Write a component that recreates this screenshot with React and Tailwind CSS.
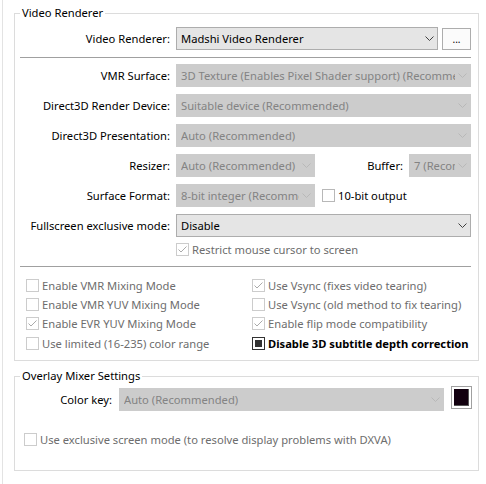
import React from "react";

function Chevron({ disabled }) {
  return (
    <svg width="9" height="5" viewBox="0 0 9 5" className="block">
      <polyline
        points="0.5,0.5 4.5,4.5 8.5,0.5"
        fill="none"
        stroke={disabled ? "#b8b8b8" : "#404040"}
        strokeWidth="1"
      />
    </svg>
  );
}

function Select({ disabled, children, className = "" }) {
  return (
    <div
      className={
        (disabled
          ? "border-[#cccccc] bg-[#cccccc] text-[#838383] "
          : "border-[#adadad] bg-[#e5e5e5] text-black ") +
        "flex h-[23px] min-w-0 items-center border pl-[4px] " +
        className
      }
    >
      <span className="min-w-0 flex-1 overflow-hidden whitespace-nowrap">{children}</span>
      <span className="flex w-[15px] shrink-0 justify-center">
        <Chevron disabled={disabled} />
      </span>
    </div>
  );
}

function CheckMark({ color }) {
  return (
    <svg width="11" height="11" viewBox="0 0 11 11" className="block">
      <polyline points="1.5,5.5 4,8 9.5,2.5" fill="none" stroke={color} strokeWidth="1" />
    </svg>
  );
}

function Checkbox({ state = "off", disabled = true, bold = false, children }) {
  let box;
  if (state === "mixed") {
    box = (
      <span className="flex h-[13px] w-[13px] shrink-0 items-center justify-center border border-[#333333] bg-white">
        <span className="block h-[7px] w-[7px] bg-[#333333]" />
      </span>
    );
  } else {
    box = (
      <span
        className={
          (disabled ? "border-[#cccccc] " : "border-[#b8b8b8] ") +
          "flex h-[13px] w-[13px] shrink-0 items-center justify-center border bg-white"
        }
      >
        {state === "on" ? <CheckMark color="#aaaaaa" /> : null}
      </span>
    );
  }
  return (
    <div className="flex h-[19px] items-center gap-[3px] whitespace-nowrap">
      {box}
      <span
        className={
          (bold ? "font-bold text-black " : disabled ? "text-[#6d6d6d] " : "text-black ") + "leading-[16px]"
        }
      >
        {children}
      </span>
    </div>
  );
}

function Row({ label, children, className = "" }) {
  return (
    <div className={"flex min-w-0 items-center " + className}>
      <div className="w-[150px] shrink-0 whitespace-nowrap text-right">{label}</div>
      <div className="ml-[6px] flex min-w-0 flex-1 items-center">{children}</div>
    </div>
  );
}

export default function App() {
  return (
    <div className="h-[484px] w-[486px] overflow-hidden bg-white pl-[2px] font-['Noto_Sans',sans-serif] text-[11.2px] leading-[16px] text-black">
      <div className="h-full border-l border-[#e3e3e3] pl-[11px] pt-[6px]">
        <fieldset className="w-[465px] min-w-0 border border-[#dcdcdc] pb-[7px] pl-[5px] pr-[7px]">
          <legend className="ml-0 px-[2px] leading-[14px]">Video Renderer</legend>
          <Row label="Video Renderer:" className="mt-[7px]">
            <Select className="flex-1">Madshi Video Renderer</Select>
            <button className="ml-[4px] h-[22px] w-[29px] shrink-0 border border-[#adadad] bg-[#fbfbfb] text-[10px] leading-[10px] text-black">
              ...
            </button>
          </Row>
          <div className="mt-[7px] h-px bg-[#a0a0a0]" />
          <Row label="VMR Surface:" className="mt-[6px]">
            <Select disabled className="flex-1">
              3D Texture (Enables Pixel Shader support) (Recommended)
            </Select>
          </Row>
          <Row label="Direct3D Render Device:" className="mt-[7px]">
            <Select disabled className="flex-1">
              Suitable device (Recommended)
            </Select>
          </Row>
          <Row label="Direct3D Presentation:" className="mt-[7px]">
            <Select disabled className="flex-1">
              Auto (Recommended)
            </Select>
          </Row>
          <Row label="Resizer:" className="mt-[7px]">
            <Select disabled className="w-[139px] shrink-0">
              Auto (Recommended)
            </Select>
            <div className="flex-1" />
            <span className="whitespace-nowrap">Buffer:</span>
            <Select disabled className="ml-[6px] w-[62px] shrink-0">
              7 (Recommended)
            </Select>
          </Row>
          <Row label="Surface Format:" className="mt-[7px]">
            <Select disabled className="w-[139px] shrink-0">
              8-bit integer (Recommended)
            </Select>
            <div className="ml-[7px]">
              <Checkbox state="off" disabled={false}>
                10-bit output
              </Checkbox>
            </div>
          </Row>
          <Row label="Fullscreen exclusive mode:" className="mt-[7px]">
            <Select className="flex-1">Disable</Select>
          </Row>
          <div className="mt-[3px] pl-[156px]">
            <Checkbox state="on">Restrict mouse cursor to screen</Checkbox>
          </div>
          <div className="mt-[7px] h-px bg-[#a0a0a0]" />
          <div className="mt-[9px] grid grid-cols-[226px_1fr] pl-[6px]">
            <Checkbox>Enable VMR Mixing Mode</Checkbox>
            <Checkbox state="on">Use Vsync (fixes video tearing)</Checkbox>
            <Checkbox>Enable VMR YUV Mixing Mode</Checkbox>
            <Checkbox>Use Vsync (old method to fix tearing)</Checkbox>
            <Checkbox state="on">Enable EVR YUV Mixing Mode</Checkbox>
            <Checkbox state="on">Enable flip mode compatibility</Checkbox>
            <div className="mt-[1px]">
              <Checkbox>Use limited (16-235) color range</Checkbox>
            </div>
            <div className="mt-[1px]">
              <Checkbox state="mixed" disabled={false} bold>
                Disable 3D subtitle depth correction
              </Checkbox>
            </div>
          </div>
        </fieldset>

        <fieldset className="mt-[8px] w-[465px] min-w-0 border border-[#dcdcdc] pb-[21px] pr-[6px]">
          <legend className="ml-[5px] px-[2px] leading-[14px]">Overlay Mixer Settings</legend>
          <div className="mt-[3px] flex items-start">
            <div className="mt-[2px] flex h-[23px] w-[97px] shrink-0 items-center justify-end whitespace-nowrap">Color key:</div>
            <Select disabled className="ml-[7px] mt-[2px] flex-1">
              Auto (Recommended)
            </Select>
            <div className="ml-[7px] h-[23px] w-[21px] shrink-0 border border-[#a0a0a0] bg-white p-[2px]">
              <div className="h-full w-full border-r border-b border-[#555555] bg-[#12000f]" />
            </div>
          </div>
          <div className="mt-[19px] pl-[9px]">
            <Checkbox>Use exclusive screen mode (to resolve display problems with DXVA)</Checkbox>
          </div>
        </fieldset>
      </div>
    </div>
  );
}
